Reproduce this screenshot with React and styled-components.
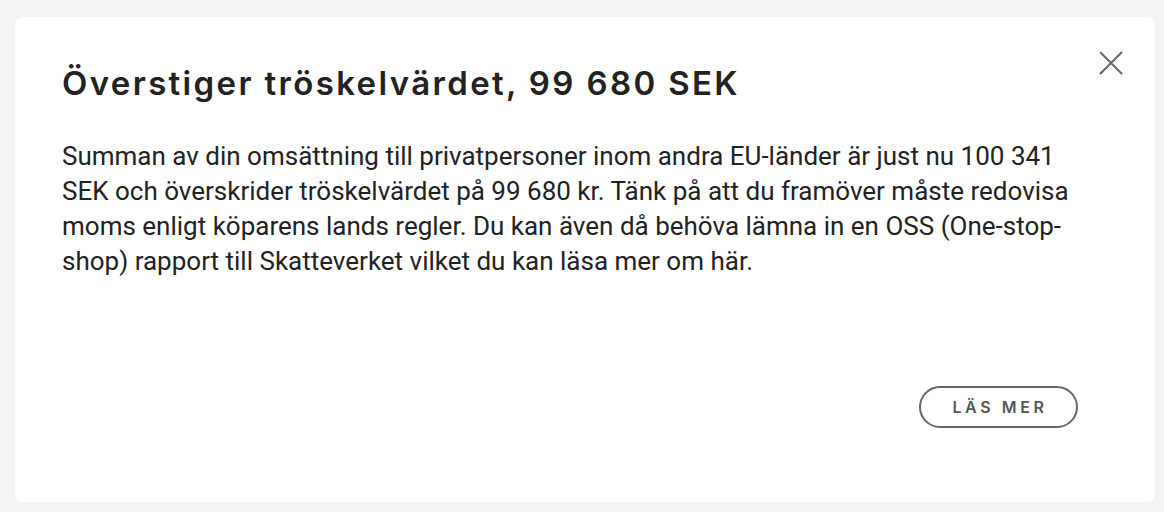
import styled, { createGlobalStyle } from 'styled-components'

const GlobalStyle = createGlobalStyle`
	html, body {
		margin: 0;
		padding: 0;
		background: #f4f4f4;
	}
	* {
		box-sizing: border-box;
	}
`

const Page = styled.div`
	width: 1164px;
	height: 512px;
	padding: 17px 9px 10px 15px;
`

const Card = styled.section`
	position: relative;
	height: 485px;
	background: #fff;
	border-radius: 8px;
	padding: 44px 77px 0 47px;
	display: flex;
	flex-direction: column;
`

const Title = styled.h2`
	margin: 0;
	font-family: 'Inter', 'Noto Sans', sans-serif;
	font-weight: 600;
	font-size: 33px;
	line-height: 44px;
	color: #222;
	letter-spacing: 2.35px;
`

const Body = styled.p`
	margin: 34px 0 0;
	font-family: 'Roboto', 'Liberation Sans', sans-serif;
	font-size: 26px;
	line-height: 35px;
	color: #222;
	white-space: nowrap;
`

const Actions = styled.div`
	margin-top: auto;
	margin-bottom: 74px;
	display: flex;
	justify-content: flex-end;
`

const OutlineButton = styled.button`
	width: 159px;
	height: 42px;
	border: 2px solid #666;
	border-radius: 21px;
	background: transparent;
	font-family: 'Inter', 'Noto Sans', sans-serif;
	font-weight: 600;
	font-size: 16px;
	letter-spacing: 3.6px;
	padding: 0 0 0 3px;
	color: #555;
	cursor: pointer;
`

const CloseButton = styled.button`
	position: absolute;
	top: 34px;
	right: 32px;
	width: 24px;
	height: 24px;
	padding: 0;
	border: 0;
	background: transparent;
	cursor: pointer;
`

export default function App() {
	return (
		<>
			<GlobalStyle />
			<Page>
				<Card>
					<CloseButton aria-label='Stäng'>
						<svg width='24' height='24' viewBox='0 0 24 24'>
							<path d='M1 1L23 23M23 1L1 23' stroke='#666' strokeWidth='2' fill='none' />
						</svg>
					</CloseButton>
					<Title>Överstiger tröskelvärdet, 99 680 SEK</Title>
					<Body>
						Summan av din omsättning till privatpersoner inom andra EU-länder är just nu 100 341
						<br />
						SEK och överskrider tröskelvärdet på 99 680 kr. Tänk på att du framöver måste redovisa
						<br />
						moms enligt köparens lands regler. Du kan även då behöva lämna in en OSS (One-stop-
						<br />
						shop) rapport till Skatteverket vilket du kan läsa mer om här.
					</Body>
					<Actions>
						<OutlineButton>LÄS MER</OutlineButton>
					</Actions>
				</Card>
			</Page>
		</>
	)
}
